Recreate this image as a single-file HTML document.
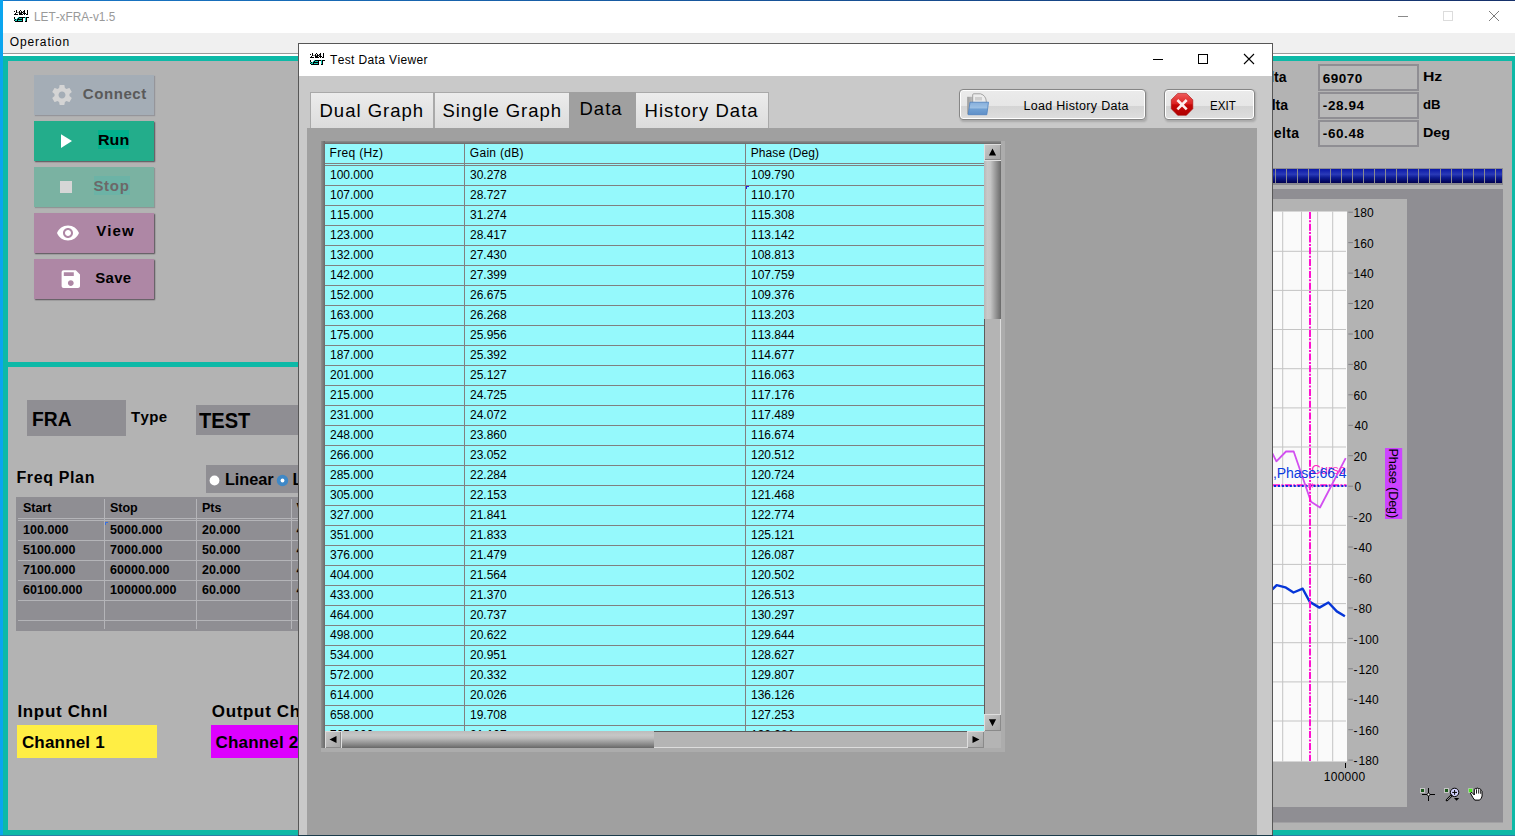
<!DOCTYPE html><html><head><meta charset="utf-8"><title>LET-xFRA-v1.5</title><style>

html,body{margin:0;padding:0}
body{width:1515px;height:836px;overflow:hidden;position:relative;background:#fff;font-family:'Liberation Sans', sans-serif;font-size:12px;color:#000}
.abs{position:absolute;display:block}
.t{position:absolute;white-space:pre;line-height:1;font-kerning:none}
.btn{position:absolute;left:34px;width:120px;height:40px;box-shadow:1px 1px 1.2px rgba(45,35,45,.7)}
.fld{position:absolute;left:1318px;width:97px;height:23px;border:2px solid #8f8e93;background:#b8b8b8}
.gb{position:absolute;height:29px;top:89px;border:1px solid #868686;border-radius:4px;box-shadow:inset 0 0 0 1px #fff,1px 1.5px 2px rgba(0,0,0,.16);background:linear-gradient(#ebebeb 0,#e6e6e6 55%,#d4d4d4 56%,#dedede 100%)}
.tab{position:absolute;top:92px;height:36px;background:linear-gradient(#ececec,#dcdcdc);border:1px solid #a9a9a9;border-bottom:none;box-sizing:border-box}
.sb{position:absolute;background:linear-gradient(135deg,#c9c9c9,#b4b4b4 55%,#a4a4a4);box-shadow:inset 1px 1px 0 #dedede,inset -1px -1px 0 #8a8a8a}

</style></head><body>
<div class="abs" style="left:0;top:0;width:1515px;height:1px;background:linear-gradient(90deg,#1878c8,#16306a)"></div>
<div class="abs" style="left:0;top:0;width:3px;height:836px;background:#0aa5ef"></div>
<div class="abs" style="left:3px;top:33px;width:1512px;height:20px;background:#f0f0f0"></div>
<div class="abs" style="left:3px;top:53px;width:1512px;height:1px;background:#9a9a9a"></div>
<svg class="abs" style="left:14px;top:10px" width="15" height="12" viewBox="0 0 15 12" shape-rendering="crispEdges"><rect x="2" y="0" width="1" height="1" fill="#000"/><rect x="6" y="0" width="1" height="1" fill="#000"/><rect x="10" y="0" width="1" height="1" fill="#000"/><rect x="13" y="0" width="1" height="1" fill="#000"/><rect x="0" y="1" width="1" height="1" fill="#000"/><rect x="2" y="1" width="1" height="1" fill="#000"/><rect x="5" y="1" width="1" height="1" fill="#000"/><rect x="7" y="1" width="1" height="1" fill="#000"/><rect x="9" y="1" width="2" height="1" fill="#000"/><rect x="13" y="1" width="1" height="1" fill="#000"/><rect x="2" y="2" width="1" height="1" fill="#000"/><rect x="3" y="2" width="2" height="1" fill="#8a8a8a"/><rect x="5" y="2" width="1" height="1" fill="#000"/><rect x="6" y="2" width="1" height="1" fill="#8a8a8a"/><rect x="7" y="2" width="2" height="1" fill="#000"/><rect x="9" y="2" width="1" height="1" fill="#8a8a8a"/><rect x="10" y="2" width="1" height="1" fill="#000"/><rect x="13" y="2" width="1" height="1" fill="#000"/><rect x="1" y="3" width="1" height="1" fill="#000"/><rect x="5" y="3" width="3" height="1" fill="#000"/><rect x="9" y="3" width="3" height="1" fill="#000"/><rect x="13" y="3" width="1" height="1" fill="#000"/><rect x="0" y="4" width="4" height="1" fill="#000"/><rect x="5" y="4" width="4" height="1" fill="#000"/><rect x="10" y="4" width="1" height="1" fill="#000"/><rect x="12" y="4" width="2" height="1" fill="#000"/><rect x="0" y="7" width="1" height="1" fill="#000"/><rect x="4" y="7" width="1" height="1" fill="#19cdb8"/><rect x="5" y="7" width="6" height="1" fill="#000"/><rect x="11" y="7" width="1" height="1" fill="#19cdb8"/><rect x="12" y="7" width="3" height="1" fill="#000"/><rect x="0" y="8" width="1" height="1" fill="#000"/><rect x="3" y="8" width="1" height="1" fill="#19cdb8"/><rect x="4" y="8" width="1" height="1" fill="#000"/><rect x="5" y="8" width="3" height="1" fill="#19cdb8"/><rect x="8" y="8" width="1" height="1" fill="#000"/><rect x="11" y="8" width="1" height="1" fill="#19cdb8"/><rect x="12" y="8" width="1" height="1" fill="#000"/><rect x="0" y="9" width="1" height="1" fill="#19cdb8"/><rect x="1" y="9" width="1" height="1" fill="#000"/><rect x="2" y="9" width="1" height="1" fill="#19cdb8"/><rect x="3" y="9" width="6" height="1" fill="#000"/><rect x="11" y="9" width="1" height="1" fill="#19cdb8"/><rect x="12" y="9" width="1" height="1" fill="#000"/><rect x="0" y="10" width="1" height="1" fill="#000"/><rect x="1" y="10" width="2" height="1" fill="#19cdb8"/><rect x="3" y="10" width="1" height="1" fill="#000"/><rect x="4" y="10" width="4" height="1" fill="#19cdb8"/><rect x="8" y="10" width="1" height="1" fill="#000"/><rect x="11" y="10" width="1" height="1" fill="#19cdb8"/><rect x="12" y="10" width="1" height="1" fill="#000"/><rect x="1" y="11" width="8" height="1" fill="#000"/><rect x="11" y="11" width="2" height="1" fill="#000"/></svg>
<svg class="abs" style="left:1390px;top:5px" width="120" height="24" viewBox="1390 5 120 24"><path d="M1398 16.5h10" stroke="#8a8a8a" stroke-width="1"/><rect x="1443.5" y="11.5" width="9" height="9" fill="none" stroke="#dcdcdc" stroke-width="1"/><path d="M1489 11l10 10M1499 11l-10 10" stroke="#7d7d7d" stroke-width="1"/></svg>
<div class="abs" style="left:3px;top:56px;width:1512px;height:779px;background:#0db9a7"></div>
<div class="abs" style="left:8px;top:61px;width:1504px;height:769px;background:#b3b3b3"></div>
<div class="abs" style="left:8px;top:362px;width:300px;height:5px;background:#0db9a7"></div>
<div class="abs" style="left:0;top:835px;width:1515px;height:1px;background:#2b7fa8"></div>
<div class="btn" style="top:75px;background:#a4adb6;box-shadow:1px 1px 1px rgba(120,120,130,.5)"></div>
<div class="btn" style="top:121px;background:#23ad8b"></div><div class="abs" style="left:98px;top:130px;width:31px;height:19px;background:#02b08d"></div>
<div class="btn" style="top:167px;background:#7ab2a2;box-shadow:1px 1px 1px rgba(110,120,120,.5)"></div><div class="abs" style="left:94px;top:176px;width:36px;height:19px;background:#6cb3a6"></div>
<div class="btn" style="top:213px;background:#ae87a5"></div>
<div class="btn" style="top:259px;background:#ae87a5"></div>
<svg class="abs" style="left:50px;top:80px" width="36" height="212" viewBox="50 80 36 212"><g transform="translate(50,83) scale(1)"><path transform="scale(1)" d="M19.43 12.98c.04-.32.07-.64.07-.98s-.03-.66-.07-.98l2.11-1.65c.19-.15.24-.42.12-.64l-2-3.46c-.12-.22-.39-.3-.61-.22l-2.49 1c-.52-.4-1.08-.73-1.69-.98l-.38-2.65C14.46 2.18 14.25 2 14 2h-4c-.25 0-.46.18-.49.42l-.38 2.65c-.61.25-1.17.59-1.69.98l-2.49-1c-.23-.09-.49 0-.61.22l-2 3.46c-.13.22-.07.49.12.64l2.11 1.65c-.04.32-.07.65-.07.98s.03.66.07.98l-2.11 1.65c-.19.15-.24.42-.12.64l2 3.46c.12.22.39.3.61.22l2.49-1c.52.4 1.08.73 1.69.98l.38 2.65c.03.24.24.42.49.42h4c.25 0 .46-.18.49-.42l.38-2.65c.61-.25 1.17-.59 1.69-.98l2.49 1c.23.09.49 0 .61-.22l2-3.46c.12-.22.07-.49-.12-.64l-2.11-1.65zM12 15.5c-1.93 0-3.5-1.57-3.5-3.5s1.57-3.5 3.5-3.5 3.500 1.570 3.500 3.500-1.570 3.500-3.500 3.500z" fill="#d4d4d4"/></g><path d="M61 134.3v13.6l11-6.8z" fill="#fff"/><rect x="60" y="181" width="12" height="12" fill="#d6d6d6"/><path d="M68 225.5c-5 0-9.300 3.100-11 7.500 1.700 4.400 6 7.500 11 7.500s9.300-3.100 11-7.500c-1.700-4.400-6-7.500-11-7.500zm0 12.500c-2.760 0-5-2.240-5-5s2.240-5 5-5 5 2.240 5 5-2.240 5-5 5zm0-8c-1.660 0-3 1.340-3 3s1.340 3 3 3 3-1.340 3-3-1.340-3-3-3z" fill="#fff"/><path d="M75.800 270.300h-12.200c-1.100 0-2 .900-2 2v13.600c0 1.100.900 2 2 2h14.400c1.100 0 2-.900 2-2v-11.400l-4.200-4.200zm-5 15.700c-1.600 0-2.900-1.300-2.900-2.900s1.300-2.900 2.900-2.900 2.900 1.300 2.900 2.900-1.300 2.900-2.900 2.900zm3-10h-10v-3.800h10v3.800z" fill="#fff"/></svg>
<div class="abs" style="left:27px;top:400px;width:99px;height:36px;background:#8f8e93"></div>
<div class="abs" style="left:196px;top:405px;width:120px;height:30px;background:#8f8e93"></div>
<div class="abs" style="left:206px;top:465px;width:110px;height:27.500px;background:#8f8e93"></div>
<svg class="abs" style="left:206px;top:470px" width="92" height="20" viewBox="206 470 92 20"><circle cx="214.500" cy="480.500" r="4.900" fill="#fff"/><circle cx="282.500" cy="480.500" r="5.700" fill="#3f88c6"/><circle cx="282.500" cy="480.500" r="1.900" fill="#fff"/></svg>
<div class="abs" style="left:16px;top:497px;width:300px;height:134px;background:#8f8e93"></div>
<div class="abs" style="left:104px;top:499px;width:1.400px;height:130px;background:#b4b4b8"></div>
<div class="abs" style="left:196px;top:499px;width:1.400px;height:130px;background:#b4b4b8"></div>
<div class="abs" style="left:291px;top:499px;width:1.400px;height:130px;background:#b4b4b8"></div>
<div class="abs" style="left:18px;top:517.6px;width:290px;height:1.300px;background:#b4b4b8"></div>
<div class="abs" style="left:18px;top:520.2px;width:290px;height:1.300px;background:#b4b4b8"></div>
<div class="abs" style="left:18px;top:539.8px;width:290px;height:1.300px;background:#b4b4b8"></div>
<div class="abs" style="left:18px;top:559.9px;width:290px;height:1.300px;background:#b4b4b8"></div>
<div class="abs" style="left:18px;top:580px;width:290px;height:1.300px;background:#b4b4b8"></div>
<div class="abs" style="left:18px;top:600.1px;width:290px;height:1.300px;background:#b4b4b8"></div>
<div class="abs" style="left:18px;top:620px;width:290px;height:1.300px;background:#b4b4b8"></div>
<div class="abs" style="left:105.400px;top:521.500px;width:3px;height:1px;background:#3a6fe0"></div><div class="abs" style="left:105.400px;top:521.500px;width:1px;height:3px;background:#3a6fe0"></div>
<div class="abs" style="left:17px;top:725px;width:140px;height:33px;background:#ffee44"></div>
<div class="abs" style="left:211px;top:725px;width:100px;height:33px;background:#dd00ff"></div>
<div class="fld" style="top:64px"></div>
<div class="fld" style="top:92px"></div>
<div class="fld" style="top:120px"></div>
<div class="abs" style="left:1270px;top:167.500px;width:233px;height:17px;background:#8a8a90"></div>
<div class="abs" style="left:1265px;top:169px;width:237px;height:14px;background:linear-gradient(#0a18a8 0,#2a3ab8 38%,#0c1a90 62%,#000050 100%)"></div>
<div class="abs" style="left:1264px;top:169px;width:238px;height:14px;background:repeating-linear-gradient(90deg,#8a8a90 0,#8a8a90 1px,transparent 1px,transparent 11px)"></div>
<svg class="abs" style="left:1273px;top:189px" width="235" height="640" viewBox="1273 189 235 640"><rect x="1273" y="189" width="230" height="633.5" fill="#8f8e93"/><rect x="1273" y="199" width="134" height="608" fill="#b3b3b3"/><rect x="1273" y="211.5" width="74" height="550" fill="#fafafa"/><rect x="1273" y="250.8" width="73" height="1" fill="#c4c4c4"/><rect x="1273" y="289.9" width="73" height="1" fill="#c4c4c4"/><rect x="1273" y="329.0" width="73" height="1" fill="#c4c4c4"/><rect x="1273" y="368.2" width="73" height="1" fill="#c4c4c4"/><rect x="1273" y="407.4" width="73" height="1" fill="#c4c4c4"/><rect x="1273" y="446.5" width="73" height="1" fill="#c4c4c4"/><rect x="1273" y="485.6" width="73" height="1" fill="#c4c4c4"/><rect x="1273" y="524.8" width="73" height="1" fill="#c4c4c4"/><rect x="1273" y="563.9" width="73" height="1" fill="#c4c4c4"/><rect x="1273" y="603.1" width="73" height="1" fill="#c4c4c4"/><rect x="1273" y="642.2" width="73" height="1" fill="#c4c4c4"/><rect x="1273" y="681.4" width="73" height="1" fill="#c4c4c4"/><rect x="1273" y="720.5" width="73" height="1" fill="#c4c4c4"/><rect x="1282.2" y="211.5" width="1" height="550" fill="#c4c4c4"/><rect x="1301.0" y="211.5" width="1" height="550" fill="#c4c4c4"/><rect x="1317.1" y="211.5" width="1" height="550" fill="#c4c4c4"/><rect x="1332.2" y="211.5" width="1" height="550" fill="#c4c4c4"/><rect x="1348.3" y="211.7" width="4.6" height="1" fill="#808085"/><rect x="1348.3" y="242.1" width="4.6" height="1" fill="#808085"/><rect x="1348.3" y="272.6" width="4.6" height="1" fill="#808085"/><rect x="1348.3" y="303.0" width="4.6" height="1" fill="#808085"/><rect x="1348.3" y="333.5" width="4.6" height="1" fill="#808085"/><rect x="1348.3" y="363.9" width="4.6" height="1" fill="#808085"/><rect x="1348.3" y="394.3" width="4.6" height="1" fill="#808085"/><rect x="1348.3" y="424.8" width="4.6" height="1" fill="#808085"/><rect x="1348.3" y="455.2" width="4.6" height="1" fill="#808085"/><rect x="1348.3" y="485.7" width="4.6" height="1" fill="#808085"/><rect x="1348.3" y="516.1" width="4.6" height="1" fill="#808085"/><rect x="1348.3" y="546.5" width="4.6" height="1" fill="#808085"/><rect x="1348.3" y="577.0" width="4.6" height="1" fill="#808085"/><rect x="1348.3" y="607.4" width="4.6" height="1" fill="#808085"/><rect x="1348.3" y="637.9" width="4.6" height="1" fill="#808085"/><rect x="1348.3" y="668.3" width="4.6" height="1" fill="#808085"/><rect x="1348.3" y="698.7" width="4.6" height="1" fill="#808085"/><rect x="1348.3" y="729.2" width="4.6" height="1" fill="#808085"/><rect x="1348.3" y="759.6" width="4.6" height="1" fill="#808085"/><rect x="1345" y="763" width="1" height="5" fill="#000"/><line x1="1273" y1="485.2" x2="1346.5" y2="485.2" stroke="#ff10d0" stroke-width="2" stroke-dasharray="7 1.4 2 1.4"/><line x1="1274" y1="486.1" x2="1346.5" y2="486.1" stroke="#0a2ee0" stroke-width="2" stroke-dasharray="2 1.96"/><polyline fill="none" stroke="#d24ff0" stroke-width="1.8" stroke-linejoin="round" points="1272.4,453.3 1276.4,461.3 1286,451.5 1293.7,451.5 1311,501.8 1320,507.5 1345.7,458.1"/><polyline fill="none" stroke="#0636d8" stroke-width="2.4" stroke-linejoin="round" points="1272.4,589.3 1276.7,585.1 1285.3,587.3 1293.5,592.5 1302.7,588.7 1309.8,601.9 1319.4,607.6 1328.4,602.5 1336.8,611.4 1344.9,616.2"/><line x1="1310" y1="211.9" x2="1310" y2="761" stroke="#ff10d0" stroke-width="2" stroke-dasharray="7 1.4 2 1.4"/><path d="M1307.8 483l5 5M1312.8 483l-5 5" stroke="#ff40d8" stroke-width="0.8"/><clipPath id="pc"><rect x="1273" y="211.5" width="73.500" height="550"/></clipPath><text clip-path="url(#pc)" x="1311.300" y="474.300" font-family="Liberation Sans, sans-serif" font-size="13" fill="#ff28c4">Cursor 0</text><text x="1273" y="478" font-family="Liberation Sans, sans-serif" font-size="14" fill="#0a3ce0" textLength="73.500" lengthAdjust="spacing">,Phase:66.4</text><rect x="1385" y="448" width="17.2" height="71" fill="#cc44ff"/><text transform="translate(1389.4,448.6) rotate(90)" font-family="Liberation Sans, sans-serif" font-size="12.5" fill="#000" textLength="69.5" lengthAdjust="spacing">Phase (Deg)</text><rect x="1420" y="788" width="5" height="5" fill="#c4c4c4"/><rect x="1421" y="789" width="3" height="3" fill="#1d5a1d"/><path d="M1428.5 788v13M1422 794.5h13" stroke="#000" stroke-width="1"/><circle cx="1428.5" cy="794.5" r="1.4" fill="#fff" stroke="#000" stroke-width="0.9"/><rect x="1444" y="788" width="5" height="5" fill="#c4c4c4"/><rect x="1445" y="789" width="3" height="3" fill="#1d5a1d"/><circle cx="1454.6" cy="792.4" r="4.2" fill="#d4d4ff" stroke="#000" stroke-width="1"/><path d="M1452.2 792.4h4.8M1454.6 790v4.8" stroke="#000" stroke-width="1"/><path d="M1451.4 795.6l-4.6 4.6" stroke="#000" stroke-width="2.2" stroke-linecap="round"/><path d="M1451.2 795.9l-4.2 4.2" stroke="#ddd" stroke-width="0.7"/><path d="M1454 798h5.2l-2.6 2.8z" fill="#000"/><rect x="1468" y="788" width="5" height="5" fill="#a8c8a0"/><rect x="1469" y="789" width="3" height="3" fill="#48e820"/><path d="M1470.4 793.1L1471.9 792.4L1474.3 795V789.3L1475.2 788.5L1476.3 789.2L1476.7 788.2L1477.9 788L1478.7 788.9L1479.6 788.6L1480.6 789.2L1481.1 790.3L1482 791.3L1482.1 796L1481.3 798.2L1479.6 800.1H1474.7L1472.7 797.3Z" fill="#fff" stroke="#000" stroke-width="1" stroke-linejoin="round"/><path d="M1476.5 789.6v4M1478.7 789.3v4.300M1480.7 790.2v3.600" stroke="#000" stroke-width="0.9"/></svg>
<span class="t" style="left:33.6px;top:11.0px;font-size:12px;color:#999;transform:scaleX(0.9827);transform-origin:0 0;">LET-xFRA-v1.5</span><span class="t" style="left:9.8px;top:36.0px;font-size:12px;letter-spacing:0.85px;">Operation</span><span class="t" style="left:82.8px;top:86.1px;font-size:15px;font-weight:700;color:#5a5a5a;letter-spacing:0.58px;">Connect</span><span class="t" style="left:97.6px;top:131.6px;font-size:15px;font-weight:700;transform:scaleX(1.0704);transform-origin:0 0;">Run</span><span class="t" style="left:93.4px;top:177.5px;font-size:15px;font-weight:700;color:#6c6868;letter-spacing:0.70px;">Stop</span><span class="t" style="left:96.2px;top:223.3px;font-size:15px;font-weight:700;letter-spacing:1.07px;">View</span><span class="t" style="left:95.2px;top:269.5px;font-size:15px;font-weight:700;letter-spacing:0.33px;">Save</span><span class="t" style="left:32.1px;top:409.7px;font-size:19.5px;font-weight:700;transform:scaleX(0.9872);transform-origin:0 0;">FRA</span><span class="t" style="left:131.0px;top:409.0px;font-size:15px;font-weight:700;letter-spacing:0.40px;">Type</span><span class="t" style="left:199.0px;top:410.0px;font-size:22px;font-weight:700;transform:scaleX(0.9125);transform-origin:0 0;">TEST</span><span class="t" style="left:16.4px;top:470.0px;font-size:16px;font-weight:700;letter-spacing:0.64px;">Freq Plan</span><span class="t" style="left:224.9px;top:470.8px;font-size:16.3px;font-weight:700;letter-spacing:-0.04px;">Linear</span><span class="t" style="left:292.6px;top:470.8px;font-size:16.3px;font-weight:700;">Log</span><span class="t" style="left:17.4px;top:702.6px;font-size:17px;font-weight:700;letter-spacing:0.67px;">Input Chnl</span><span class="t" style="left:21.9px;top:733.7px;font-size:17px;font-weight:700;letter-spacing:0.19px;">Channel 1</span><span class="t" style="left:211.8px;top:702.6px;font-size:17px;font-weight:700;letter-spacing:0.66px;">Output Chnl</span><span class="t" style="left:215.5px;top:733.7px;font-size:17px;font-weight:700;letter-spacing:0.19px;">Channel 2</span><span class="t" style="left:22.9px;top:501.9px;font-size:12.5px;font-weight:700;">Start</span><span class="t" style="left:109.9px;top:501.9px;font-size:12.5px;font-weight:700;">Stop</span><span class="t" style="left:202.0px;top:501.9px;font-size:12.5px;font-weight:700;">Pts</span><span class="t" style="left:296.6px;top:501.9px;font-size:12.5px;font-weight:700;">Vpp</span><span class="t" style="left:22.9px;top:523.7px;font-size:12.5px;font-weight:700;letter-spacing:0.05px;">100.000</span><span class="t" style="left:109.9px;top:523.7px;font-size:12.5px;font-weight:700;letter-spacing:0.05px;">5000.000</span><span class="t" style="left:202.0px;top:523.7px;font-size:12.5px;font-weight:700;letter-spacing:0.05px;">20.000</span><span class="t" style="left:296.6px;top:523.7px;font-size:12.5px;font-weight:700;letter-spacing:0.05px;">4.000</span><span class="t" style="left:22.9px;top:543.8px;font-size:12.5px;font-weight:700;letter-spacing:0.05px;">5100.000</span><span class="t" style="left:109.9px;top:543.8px;font-size:12.5px;font-weight:700;letter-spacing:0.05px;">7000.000</span><span class="t" style="left:202.0px;top:543.8px;font-size:12.5px;font-weight:700;letter-spacing:0.05px;">50.000</span><span class="t" style="left:296.6px;top:543.8px;font-size:12.5px;font-weight:700;letter-spacing:0.05px;">4.000</span><span class="t" style="left:22.9px;top:563.9px;font-size:12.5px;font-weight:700;letter-spacing:0.05px;">7100.000</span><span class="t" style="left:109.9px;top:563.9px;font-size:12.5px;font-weight:700;letter-spacing:0.05px;">60000.000</span><span class="t" style="left:202.0px;top:563.9px;font-size:12.5px;font-weight:700;letter-spacing:0.05px;">20.000</span><span class="t" style="left:296.6px;top:563.9px;font-size:12.5px;font-weight:700;letter-spacing:0.05px;">4.000</span><span class="t" style="left:22.9px;top:584.0px;font-size:12.5px;font-weight:700;letter-spacing:0.05px;">60100.000</span><span class="t" style="left:109.9px;top:584.0px;font-size:12.5px;font-weight:700;letter-spacing:0.05px;">100000.000</span><span class="t" style="left:202.0px;top:584.0px;font-size:12.5px;font-weight:700;letter-spacing:0.05px;">60.000</span><span class="t" style="left:296.6px;top:584.0px;font-size:12.5px;font-weight:700;letter-spacing:0.05px;">4.000</span><span class="t" style="left:1322.8px;top:71.6px;font-size:13.5px;font-weight:700;letter-spacing:0.45px;">69070</span><span class="t" style="left:1322.8px;top:99.3px;font-size:13.5px;font-weight:700;letter-spacing:0.60px;">-28.94</span><span class="t" style="left:1322.8px;top:127.2px;font-size:13.5px;font-weight:700;letter-spacing:0.60px;">-60.48</span><span class="t" style="left:1422.5px;top:70.0px;font-size:13.5px;font-weight:700;transform:scaleX(1.1667);transform-origin:0 0;">Hz</span><span class="t" style="left:1422.7px;top:97.6px;font-size:13.5px;font-weight:700;transform:scaleX(0.9765);transform-origin:0 0;">dB</span><span class="t" style="left:1422.6px;top:125.5px;font-size:13.5px;font-weight:700;transform:scaleX(1.0625);transform-origin:0 0;">Deg</span><span class="t" style="left:1218.1px;top:69.5px;font-size:14px;font-weight:700;">Freq Delta</span><span class="t" style="left:1218.8px;top:97.5px;font-size:14px;font-weight:700;">Gain Delta</span><span class="t" style="left:1215.7px;top:125.5px;font-size:14px;font-weight:700;letter-spacing:0.4px;clip-path:inset(0 0 0 58.3px);">Phase Delta</span><span class="t" style="left:1353.6px;top:207.3px;font-size:12px;">180</span><span class="t" style="left:1353.6px;top:237.7px;font-size:12px;">160</span><span class="t" style="left:1353.6px;top:268.2px;font-size:12px;">140</span><span class="t" style="left:1353.6px;top:298.6px;font-size:12px;">120</span><span class="t" style="left:1353.6px;top:329.1px;font-size:12px;">100</span><span class="t" style="left:1353.6px;top:359.5px;font-size:12px;">80</span><span class="t" style="left:1353.6px;top:389.9px;font-size:12px;">60</span><span class="t" style="left:1354.6px;top:420.4px;font-size:12px;">40</span><span class="t" style="left:1353.6px;top:450.8px;font-size:12px;">20</span><span class="t" style="left:1354.6px;top:481.3px;font-size:12px;">0</span><span class="t" style="left:1353.6px;top:511.7px;font-size:12px;"><span style="letter-spacing:1px">-</span>20</span><span class="t" style="left:1353.6px;top:542.1px;font-size:12px;"><span style="letter-spacing:1px">-</span>40</span><span class="t" style="left:1353.6px;top:572.6px;font-size:12px;"><span style="letter-spacing:1px">-</span>60</span><span class="t" style="left:1353.6px;top:603.0px;font-size:12px;"><span style="letter-spacing:1px">-</span>80</span><span class="t" style="left:1353.6px;top:633.5px;font-size:12px;"><span style="letter-spacing:1px">-</span>100</span><span class="t" style="left:1353.6px;top:663.9px;font-size:12px;"><span style="letter-spacing:1px">-</span>120</span><span class="t" style="left:1353.6px;top:694.3px;font-size:12px;"><span style="letter-spacing:1px">-</span>140</span><span class="t" style="left:1353.6px;top:724.8px;font-size:12px;"><span style="letter-spacing:1px">-</span>160</span><span class="t" style="left:1353.6px;top:755.2px;font-size:12px;"><span style="letter-spacing:1px">-</span>180</span><span class="t" style="left:1323.7px;top:771.0px;font-size:12px;letter-spacing:0.30px;">100000</span>
<div class="abs" style="left:298px;top:43px;width:975px;height:793px;background:#575757"></div>
<div class="abs" style="left:299px;top:44px;width:973px;height:32px;background:#fff"></div>
<div class="abs" style="left:299px;top:76px;width:973px;height:759px;background:#c9c9c9"></div>
<div class="abs" style="left:298px;top:835px;width:975px;height:1px;background:#1c3c4c"></div>
<svg class="abs" style="left:310px;top:53px" width="15" height="12" viewBox="0 0 15 12" shape-rendering="crispEdges"><rect x="2" y="0" width="1" height="1" fill="#000"/><rect x="6" y="0" width="1" height="1" fill="#000"/><rect x="10" y="0" width="1" height="1" fill="#000"/><rect x="13" y="0" width="1" height="1" fill="#000"/><rect x="0" y="1" width="1" height="1" fill="#000"/><rect x="2" y="1" width="1" height="1" fill="#000"/><rect x="5" y="1" width="1" height="1" fill="#000"/><rect x="7" y="1" width="1" height="1" fill="#000"/><rect x="9" y="1" width="2" height="1" fill="#000"/><rect x="13" y="1" width="1" height="1" fill="#000"/><rect x="2" y="2" width="1" height="1" fill="#000"/><rect x="3" y="2" width="2" height="1" fill="#8a8a8a"/><rect x="5" y="2" width="1" height="1" fill="#000"/><rect x="6" y="2" width="1" height="1" fill="#8a8a8a"/><rect x="7" y="2" width="2" height="1" fill="#000"/><rect x="9" y="2" width="1" height="1" fill="#8a8a8a"/><rect x="10" y="2" width="1" height="1" fill="#000"/><rect x="13" y="2" width="1" height="1" fill="#000"/><rect x="1" y="3" width="1" height="1" fill="#000"/><rect x="5" y="3" width="3" height="1" fill="#000"/><rect x="9" y="3" width="3" height="1" fill="#000"/><rect x="13" y="3" width="1" height="1" fill="#000"/><rect x="0" y="4" width="4" height="1" fill="#000"/><rect x="5" y="4" width="4" height="1" fill="#000"/><rect x="10" y="4" width="1" height="1" fill="#000"/><rect x="12" y="4" width="2" height="1" fill="#000"/><rect x="0" y="7" width="1" height="1" fill="#000"/><rect x="4" y="7" width="1" height="1" fill="#19cdb8"/><rect x="5" y="7" width="6" height="1" fill="#000"/><rect x="11" y="7" width="1" height="1" fill="#19cdb8"/><rect x="12" y="7" width="3" height="1" fill="#000"/><rect x="0" y="8" width="1" height="1" fill="#000"/><rect x="3" y="8" width="1" height="1" fill="#19cdb8"/><rect x="4" y="8" width="1" height="1" fill="#000"/><rect x="5" y="8" width="3" height="1" fill="#19cdb8"/><rect x="8" y="8" width="1" height="1" fill="#000"/><rect x="11" y="8" width="1" height="1" fill="#19cdb8"/><rect x="12" y="8" width="1" height="1" fill="#000"/><rect x="0" y="9" width="1" height="1" fill="#19cdb8"/><rect x="1" y="9" width="1" height="1" fill="#000"/><rect x="2" y="9" width="1" height="1" fill="#19cdb8"/><rect x="3" y="9" width="6" height="1" fill="#000"/><rect x="11" y="9" width="1" height="1" fill="#19cdb8"/><rect x="12" y="9" width="1" height="1" fill="#000"/><rect x="0" y="10" width="1" height="1" fill="#000"/><rect x="1" y="10" width="2" height="1" fill="#19cdb8"/><rect x="3" y="10" width="1" height="1" fill="#000"/><rect x="4" y="10" width="4" height="1" fill="#19cdb8"/><rect x="8" y="10" width="1" height="1" fill="#000"/><rect x="11" y="10" width="1" height="1" fill="#19cdb8"/><rect x="12" y="10" width="1" height="1" fill="#000"/><rect x="1" y="11" width="8" height="1" fill="#000"/><rect x="11" y="11" width="2" height="1" fill="#000"/></svg>
<svg class="abs" style="left:1145px;top:48px" width="120" height="24" viewBox="1145 48 120 24"><path d="M1153 59.500h10" stroke="#000" stroke-width="1"/><rect x="1198.500" y="54.500" width="9" height="9" fill="none" stroke="#000" stroke-width="1"/><path d="M1244 54l10 10M1254 54l-10 10" stroke="#000" stroke-width="1.100"/></svg>
<div class="abs" style="left:307px;top:128px;width:950px;height:707px;background:#a0a0a0"></div>
<div class="tab" style="left:310px;width:124px"></div>
<div class="tab" style="left:434px;width:136px"></div>
<div class="abs" style="left:569px;top:92px;width:67px;height:37px;background:#a0a0a0"></div>
<div class="tab" style="left:636px;width:133px;border-left:none"></div>
<div class="gb" style="left:959px;width:185px"></div>
<div class="gb" style="left:1164px;width:89px"></div>
<svg class="abs" style="left:965px;top:92px" width="26" height="25" viewBox="965 92 26 25"><defs><linearGradient id="fg" x1="0" y1="0" x2="0" y2="1"><stop offset="0" stop-color="#86afdc"/><stop offset=".45" stop-color="#9cc0e4"/><stop offset=".55" stop-color="#6f9fd3"/><stop offset="1" stop-color="#5f90c8"/></linearGradient><linearGradient id="pg" x1="0" y1="0" x2="1" y2="0"><stop offset="0" stop-color="#9c9c9c"/><stop offset="1" stop-color="#c2c2c2"/></linearGradient></defs><rect x="967.200" y="96.800" width="6" height="17.500" fill="url(#pg)"/><path d="M972.700 103v-8.200q0-1 1-1h6.800q5.600 1.600 5.800 8v1.200z" fill="#ececec" stroke="#9a9a9a" stroke-width=".9"/><path d="M975 97h7v3.500h-7z" fill="#cfcfcf"/><path d="M970 102.200h18.500l-1.700 12.500h-18.600z" fill="url(#fg)" stroke="#4f83c0" stroke-width=".8" stroke-linejoin="round"/></svg>
<svg class="abs" style="left:1169px;top:91px" width="26" height="27" viewBox="1169 91 26 27"><defs><linearGradient id="rg" x1="0" y1="0" x2="0" y2="1"><stop offset="0" stop-color="#ee5a5a"/><stop offset=".48" stop-color="#dc2222"/><stop offset=".52" stop-color="#c40808"/><stop offset="1" stop-color="#b00000"/></linearGradient></defs><path d="M1177.700 93.400h8.700l6.400 6.400v9l-6.400 6.500h-8.700l-6.400-6.500v-9z" fill="url(#rg)" stroke="#a80c0c" stroke-width=".6"/><path d="M1177.400 100.000l9.300 9.300M1186.700 100.000l-9.300 9.300" stroke="#fdeeee" stroke-width="2.600"/></svg>
<div class="abs" style="left:321px;top:141px;width:684px;height:611px;background:#acacac"></div>
<div class="abs" style="left:321px;top:141px;width:680px;height:607px;background:linear-gradient(90deg,#8e8e8e,#6a6a6a 4px,transparent 4px),linear-gradient(#8e8e8e,#6a6a6a 3px,transparent 3px);background-color:#b4b4b4"></div>
<div class="abs" style="left:325px;top:144px;width:659px;height:587px;background:#95f9fc;overflow:hidden"></div>
<div class="abs" style="left:464px;top:144px;width:1px;height:587px;background:#808080"></div>
<div class="abs" style="left:745px;top:144px;width:1px;height:587px;background:#808080"></div>
<div class="abs" style="left:325px;top:163px;width:659px;height:1px;background:#808080"></div>
<div class="abs" style="left:325px;top:165px;width:659px;height:1px;background:repeating-linear-gradient(#808080,#808080)"></div>
<div class="abs" style="left:325px;top:185px;width:659px;height:541px;background:repeating-linear-gradient(#808080 0,#808080 1px,transparent 1px,transparent 20px)"></div>
<div class="abs" style="left:746px;top:186px;width:3px;height:1px;background:#2222dd"></div><div class="abs" style="left:746px;top:186px;width:1px;height:3px;background:#2222dd"></div>
<div class="abs" style="left:0;top:0;width:984px;height:731px;overflow:hidden"><span class="t" style="left:330px;top:168.6px">100.000</span><span class="t" style="left:470px;top:168.6px">30.278</span><span class="t" style="left:751px;top:168.6px">109.790</span><span class="t" style="left:330px;top:188.6px">107.000</span><span class="t" style="left:470px;top:188.6px">28.727</span><span class="t" style="left:751px;top:188.6px">110.170</span><span class="t" style="left:330px;top:208.6px">115.000</span><span class="t" style="left:470px;top:208.6px">31.274</span><span class="t" style="left:751px;top:208.6px">115.308</span><span class="t" style="left:330px;top:228.6px">123.000</span><span class="t" style="left:470px;top:228.6px">28.417</span><span class="t" style="left:751px;top:228.6px">113.142</span><span class="t" style="left:330px;top:248.6px">132.000</span><span class="t" style="left:470px;top:248.6px">27.430</span><span class="t" style="left:751px;top:248.6px">108.813</span><span class="t" style="left:330px;top:268.6px">142.000</span><span class="t" style="left:470px;top:268.6px">27.399</span><span class="t" style="left:751px;top:268.6px">107.759</span><span class="t" style="left:330px;top:288.6px">152.000</span><span class="t" style="left:470px;top:288.6px">26.675</span><span class="t" style="left:751px;top:288.6px">109.376</span><span class="t" style="left:330px;top:308.6px">163.000</span><span class="t" style="left:470px;top:308.6px">26.268</span><span class="t" style="left:751px;top:308.6px">113.203</span><span class="t" style="left:330px;top:328.6px">175.000</span><span class="t" style="left:470px;top:328.6px">25.956</span><span class="t" style="left:751px;top:328.6px">113.844</span><span class="t" style="left:330px;top:348.6px">187.000</span><span class="t" style="left:470px;top:348.6px">25.392</span><span class="t" style="left:751px;top:348.6px">114.677</span><span class="t" style="left:330px;top:368.6px">201.000</span><span class="t" style="left:470px;top:368.6px">25.127</span><span class="t" style="left:751px;top:368.6px">116.063</span><span class="t" style="left:330px;top:388.6px">215.000</span><span class="t" style="left:470px;top:388.6px">24.725</span><span class="t" style="left:751px;top:388.6px">117.176</span><span class="t" style="left:330px;top:408.6px">231.000</span><span class="t" style="left:470px;top:408.6px">24.072</span><span class="t" style="left:751px;top:408.6px">117.489</span><span class="t" style="left:330px;top:428.6px">248.000</span><span class="t" style="left:470px;top:428.6px">23.860</span><span class="t" style="left:751px;top:428.6px">116.674</span><span class="t" style="left:330px;top:448.6px">266.000</span><span class="t" style="left:470px;top:448.6px">23.052</span><span class="t" style="left:751px;top:448.6px">120.512</span><span class="t" style="left:330px;top:468.6px">285.000</span><span class="t" style="left:470px;top:468.6px">22.284</span><span class="t" style="left:751px;top:468.6px">120.724</span><span class="t" style="left:330px;top:488.6px">305.000</span><span class="t" style="left:470px;top:488.6px">22.153</span><span class="t" style="left:751px;top:488.6px">121.468</span><span class="t" style="left:330px;top:508.6px">327.000</span><span class="t" style="left:470px;top:508.6px">21.841</span><span class="t" style="left:751px;top:508.6px">122.774</span><span class="t" style="left:330px;top:528.6px">351.000</span><span class="t" style="left:470px;top:528.6px">21.833</span><span class="t" style="left:751px;top:528.6px">125.121</span><span class="t" style="left:330px;top:548.6px">376.000</span><span class="t" style="left:470px;top:548.6px">21.479</span><span class="t" style="left:751px;top:548.6px">126.087</span><span class="t" style="left:330px;top:568.6px">404.000</span><span class="t" style="left:470px;top:568.6px">21.564</span><span class="t" style="left:751px;top:568.6px">120.502</span><span class="t" style="left:330px;top:588.6px">433.000</span><span class="t" style="left:470px;top:588.6px">21.370</span><span class="t" style="left:751px;top:588.6px">126.513</span><span class="t" style="left:330px;top:608.6px">464.000</span><span class="t" style="left:470px;top:608.6px">20.737</span><span class="t" style="left:751px;top:608.6px">130.297</span><span class="t" style="left:330px;top:628.6px">498.000</span><span class="t" style="left:470px;top:628.6px">20.622</span><span class="t" style="left:751px;top:628.6px">129.644</span><span class="t" style="left:330px;top:648.6px">534.000</span><span class="t" style="left:470px;top:648.6px">20.951</span><span class="t" style="left:751px;top:648.6px">128.627</span><span class="t" style="left:330px;top:668.6px">572.000</span><span class="t" style="left:470px;top:668.6px">20.332</span><span class="t" style="left:751px;top:668.6px">129.807</span><span class="t" style="left:330px;top:688.6px">614.000</span><span class="t" style="left:470px;top:688.6px">20.026</span><span class="t" style="left:751px;top:688.6px">136.126</span><span class="t" style="left:330px;top:708.6px">658.000</span><span class="t" style="left:470px;top:708.6px">19.708</span><span class="t" style="left:751px;top:708.6px">127.253</span><span class="t" style="left:330px;top:728.6px">705.000</span><span class="t" style="left:470px;top:728.6px">21.107</span><span class="t" style="left:751px;top:728.6px">132.981</span></div>
<div class="abs" style="left:984px;top:144px;width:17px;height:587px;background:#b4b4b4;box-shadow:inset 1px 0 0 #5c5c5c,inset -1px 0 0 #dcdcdc"></div>
<div class="sb" style="left:984px;top:144px;width:17px;height:16px"></div>
<div class="abs" style="left:984px;top:160px;width:17px;height:158.500px;background:linear-gradient(90deg,#b8b8b8 0,#c9c9c9 20%,#c4c4c4 38%,#8e8e8e 75%,#6a6a6a 100%);box-shadow:inset 0 1px 0 #e0e0e0"></div>
<div class="sb" style="left:984px;top:714px;width:17px;height:17px"></div>
<div class="abs" style="left:325px;top:731px;width:676px;height:17px;background:#b4b4b4;box-shadow:inset 0 1px 0 #5c5c5c,inset 0 -1px 0 #dcdcdc"></div>
<div class="abs" style="left:984px;top:731px;width:17px;height:17px;background:#b4b4b4"></div>
<div class="sb" style="left:325px;top:731px;width:16px;height:17px"></div>
<div class="abs" style="left:341px;top:731px;width:313px;height:17px;background:linear-gradient(#bcbcbc 0,#c6c6c6 25%,#bcbcbc 42%,#8a8a8a 78%,#686868 100%);box-shadow:inset 1px 0 0 #e0e0e0"></div>
<div class="sb" style="left:967px;top:731px;width:17px;height:17px"></div>
<svg class="abs" style="left:325px;top:144px" width="676" height="604" viewBox="325 144 676 604"><path d="M992.500 148.500l3.600 7h-7.200z M992.500 726.200l3.600-7h-7.200z M329.500 739.500l7-3.600v7.200z M979.500 739.500l-7-3.600v7.200z" fill="#000"/></svg>
<span class="t" style="left:330.0px;top:53.8px;font-size:12px;letter-spacing:0.37px;">Test Data Viewer</span><span class="t" style="left:319.5px;top:102.2px;font-size:18.5px;letter-spacing:1.00px;">Dual Graph</span><span class="t" style="left:442.5px;top:102.2px;font-size:18.5px;letter-spacing:0.95px;">Single Graph</span><span class="t" style="left:579.5px;top:100.4px;font-size:18.5px;letter-spacing:1.00px;">Data</span><span class="t" style="left:644.6px;top:102.2px;font-size:18.5px;letter-spacing:1.02px;">History Data</span><span class="t" style="left:1023.4px;top:99.8px;font-size:12.5px;letter-spacing:0.32px;">Load History Data</span><span class="t" style="left:1209.9px;top:99.9px;font-size:12.5px;transform:scaleX(0.9259);transform-origin:0 0;">EXIT</span><span class="t" style="left:329.5px;top:146.8px;font-size:12px;letter-spacing:0.35px;">Freq (Hz)</span><span class="t" style="left:469.8px;top:146.8px;font-size:12px;letter-spacing:0.30px;">Gain (dB)</span><span class="t" style="left:750.7px;top:146.8px;font-size:12px;letter-spacing:0.1px;">Phase (Deg)</span>
</body></html>
